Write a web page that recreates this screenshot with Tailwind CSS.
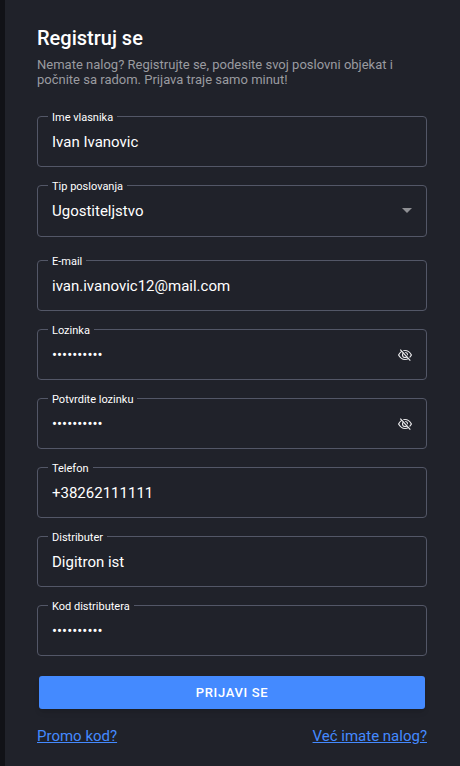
<!DOCTYPE html>
<html lang="sr-Latn">
<head>
  <meta charset="UTF-8" />
  <meta name="viewport" content="width=device-width, initial-scale=1.0"/>
  <title>Registruj se</title>
  <script src="https://cdn.jsdelivr.net/npm/@tailwindcss/browser@4"></script>
</head>
<body class="min-h-screen border-l-5 border-[#111217] bg-[#20222a] font-['Roboto',sans-serif] text-white">

  <main class="pt-6 pr-[33px] pb-4 pl-8">
    <h1 class="text-xl leading-7 font-medium">Registruj se</h1>
    <p class="mt-[5px] text-[13px] leading-[15px] text-[#9a9ba0]">
      Nemate nalog? Registrujte se, podesite svoj poslovni objekat i počnite sa radom. Prijava traje samo minut!
    </p>

    <form id="registerForm" class="mt-[29px] flex flex-col">
      <div class="flex flex-col gap-[18px]">
        <div class="relative">
          <label for="owner" class="absolute -top-[7px] left-[11px] bg-[#20222a] px-1 text-[11px] leading-[17px]">Ime vlasnika</label>
          <input type="text" id="owner" value="Ivan Ivanovic" class="block h-[51px] w-full rounded-sm border border-[#535767] px-3.5 text-[15px] focus:outline-none focus:border-[#448aff]" />
        </div>

        <div class="relative mb-[5px]">
          <label for="business" class="absolute -top-[7px] left-[11px] bg-[#20222a] px-1 text-[11px] leading-[17px]">Tip poslovanja</label>
          <select id="business" class="block h-[52px] w-full appearance-none rounded-sm border border-[#535767] bg-[#20222a] px-3.5 text-[15px] focus:outline-none focus:border-[#448aff]">
            <option>Ugostiteljstvo</option>
            <option>Trgovina</option>
          </select>
          <svg class="pointer-events-none absolute top-[23px] right-[15px] h-[5px] w-[10px]" viewBox="0 0 10 5" fill="#8f9094" aria-hidden="true"><path d="M0 0h10L5 5z"/></svg>
        </div>

        <div class="relative">
          <label for="email" class="absolute -top-[7px] left-[11px] bg-[#20222a] px-1 text-[11px] leading-[17px]">E-mail</label>
          <input type="email" id="email" value="ivan.ivanovic12@mail.com" class="block h-[51px] w-full rounded-sm border border-[#535767] px-3.5 text-[15px] focus:outline-none focus:border-[#448aff]" />
        </div>

        <div class="relative">
          <label for="password" class="absolute -top-[7px] left-[11px] bg-[#20222a] px-1 text-[11px] leading-[17px]">Lozinka</label>
          <input type="password" id="password" value="lozinka123" class="block h-[51px] w-full rounded-sm border border-[#535767] pr-10 pl-3.5 text-[15px] focus:outline-none focus:border-[#448aff]" />
          <button type="button" data-toggle="password" aria-label="Prikaži lozinku" class="absolute inset-y-0 right-[15px] flex items-center">
            <svg class="h-[14px] w-[14px]" viewBox="0 0 14 14" fill="none" stroke="#e8e8ea" stroke-width="1.2" aria-hidden="true">
              <path d="M.6 7C2.2 4 4.4 2.5 7 2.5S11.800 4 13.400 7C11.800 10 9.600 11.500 7 11.500S2.200 10 .6 7z"/>
              <circle cx="7" cy="7" r="2.500"/>
              <path d="M3.200 1.200l10 11" stroke="#20222a"/>
              <path d="M2.300 1.700l10 11"/>
            </svg>
          </button>
        </div>

        <div class="relative">
          <label for="confirm" class="absolute -top-[7px] left-[11px] bg-[#20222a] px-1 text-[11px] leading-[17px]">Potvrdite lozinku</label>
          <input type="password" id="confirm" value="lozinka123" class="block h-[51px] w-full rounded-sm border border-[#535767] pr-10 pl-3.5 text-[15px] focus:outline-none focus:border-[#448aff]" />
          <button type="button" data-toggle="confirm" aria-label="Prikaži lozinku" class="absolute inset-y-0 right-[15px] flex items-center">
            <svg class="h-[14px] w-[14px]" viewBox="0 0 14 14" fill="none" stroke="#e8e8ea" stroke-width="1.2" aria-hidden="true">
              <path d="M.6 7C2.2 4 4.4 2.5 7 2.5S11.800 4 13.400 7C11.800 10 9.600 11.500 7 11.500S2.200 10 .6 7z"/>
              <circle cx="7" cy="7" r="2.500"/>
              <path d="M3.200 1.200l10 11" stroke="#20222a"/>
              <path d="M2.300 1.700l10 11"/>
            </svg>
          </button>
        </div>

        <div class="relative">
          <label for="phone" class="absolute -top-[7px] left-[11px] bg-[#20222a] px-1 text-[11px] leading-[17px]">Telefon</label>
          <input type="tel" id="phone" value="+38262111111" class="block h-[51px] w-full rounded-sm border border-[#535767] px-3.5 text-[15px] focus:outline-none focus:border-[#448aff]" />
        </div>

        <div class="relative">
          <label for="distributor" class="absolute -top-[7px] left-[11px] bg-[#20222a] px-1 text-[11px] leading-[17px]">Distributer</label>
          <input type="text" id="distributor" value="Digitron ist" class="block h-[51px] w-full rounded-sm border border-[#535767] px-3.5 text-[15px] focus:outline-none focus:border-[#448aff]" />
        </div>

        <div class="relative">
          <label for="code" class="absolute -top-[7px] left-[11px] bg-[#20222a] px-1 text-[11px] leading-[17px]">Kod distributera</label>
          <input type="password" id="code" value="kod1234567" class="block h-[51px] w-full rounded-sm border border-[#535767] px-3.5 text-[15px] focus:outline-none focus:border-[#448aff]" />
        </div>
      </div>

      <button type="submit" class="mx-0.5 mt-5 h-[33px] rounded-[3px] bg-[#448aff] text-[13px] font-medium tracking-wider shadow-md hover:bg-[#2979ff]">PRIJAVI SE</button>
    </form>

    <div class="mt-[17px] flex justify-between text-[15px] leading-5 text-[#448aff]">
      <a href="#promo" class="underline">Promo kod?</a>
      <a href="#prijava" class="underline">Već imate nalog?</a>
    </div>
  </main>

  <script>
    document.querySelectorAll('[data-toggle]').forEach((button) => {
      button.addEventListener('click', () => {
        const input = document.getElementById(button.dataset.toggle);
        input.type = input.type === 'password' ? 'text' : 'password';
      });
    });

    document.getElementById('registerForm').addEventListener('submit', (e) => {
      e.preventDefault();
    });
  </script>
</body>
</html>
